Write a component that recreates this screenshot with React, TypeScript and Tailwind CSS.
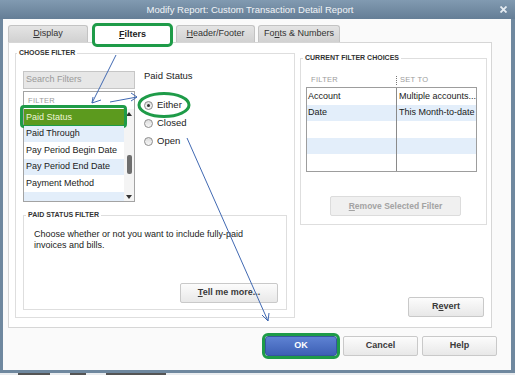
import React from "react";

const rowBlue = "bg-[#e3eefa]";

function Btn({
  children,
  className = "",
}: {
  children: React.ReactNode;
  className?: string;
}) {
  return (
    <div
      className={
        "flex h-[20px] items-center justify-center rounded-[2px] border border-[#c9c9c9] bg-linear-to-b from-[#fcfcfc] to-[#e8e8e8] text-[9px] font-bold text-[#3a3a3a] " +
        className
      }
    >
      {children}
    </div>
  );
}

function Radio({ checked, label }: { checked?: boolean; label: string }) {
  return (
    <div className="flex h-[18px] items-center">
      <span className="flex h-[9px] w-[9px] items-center justify-center rounded-full border border-[#8d8d8d] bg-linear-to-b from-[#dcdcdc] to-[#f8f8f8]">
        {checked && <span className="h-[3px] w-[3px] rounded-full bg-[#333]" />}
      </span>
      <span className="ml-[4px] text-[9.5px] text-[#222]">{label}</span>
    </div>
  );
}

function Tab({
  children,
  className = "",
}: {
  children: React.ReactNode;
  className?: string;
}) {
  return (
    <div
      className={
        "flex h-[17px] items-center justify-center rounded-t-[3px] border border-b-0 border-[#c3c3c3] bg-linear-to-b from-[#e4e4e4] to-[#d1d1d1] text-[9px] text-[#333] " +
        className
      }
    >
      {children}
    </div>
  );
}

const filters = [
  { t: "Paid Status", sel: true },
  { t: "Paid Through", blue: true },
  { t: "Pay Period Begin Date" },
  { t: "Pay Period End Date", blue: true },
  { t: "Payment Method" },
];

const choices = [
  { a: "Account", b: "Multiple accounts..." },
  { a: "Date", b: "This Month-to-date", blue: true },
  { a: "", b: "" },
  { a: "", b: "", blue: true },
  { a: "", b: "" },
];

export default function App() {
  return (
    <div className="relative flex h-[375px] w-[515px] flex-col overflow-hidden bg-[#e9ecef] font-['Liberation_Sans',Arial,sans-serif] text-[9px] text-[#222]">
      <div className="flex h-[373px] w-[515px] flex-col bg-[#6f889f]">
        {/* title bar */}
        <div className="flex h-[19px] items-center bg-linear-to-b from-[#819ab1] to-[#657e96]">
          <div className="flex-1 text-center text-[9.5px] leading-none text-[#f1f4f7]">
            Modify Report: Custom Transaction Detail Report
          </div>
          <svg width="7" height="7" viewBox="0 0 7 7" className="mr-[8px]">
            <path d="M0.5 0.5 L6.5 6.5 M6.5 0.5 L0.5 6.5" stroke="#e6ecf2" strokeWidth="1.8" />
          </svg>
        </div>

        {/* body */}
        <div className="mb-[3px] ml-[3px] mr-[4px] flex flex-1 flex-col bg-[#fafafa] pl-[5px] pt-[6px]">
          {/* tabs */}
          <div className="flex h-[17px] items-end">
            <Tab className="w-[80px]">
              <span>
                <span className="underline">D</span>isplay
              </span>
            </Tab>
            <div className="relative z-10 -mb-[5px] ml-[4px] flex h-[24px] w-[81px] items-center justify-center rounded-[5px] border-[3px] border-[#1e9b48] bg-white text-[9px] font-bold text-[#222]">
              <span>
                <span className="underline">F</span>ilters
              </span>
            </div>
            <Tab className="ml-[3px] w-[79px]">
              <span>
                <span className="underline">H</span>eader/Footer
              </span>
            </Tab>
            <Tab className="ml-[3px] w-[82px]">
              <span>
                Fo<span className="underline">n</span>ts &amp; Numbers
              </span>
            </Tab>
          </div>

          {/* panel */}
          <div className="flex h-[286px] w-[484px] gap-[5px] border border-[#d6d6d6] bg-white pb-[9px] pl-[6px] pr-[4px] pt-[6px]">
            {/* choose filter */}
            <fieldset className="flex w-[280px] flex-col border border-[#dedede] pb-[7px] pl-[7px] pr-[7px] pt-[14px]">
              <legend className="-ml-[6px] px-[2px] text-[7px] font-bold leading-[8px] text-[#333]">
                CHOOSE FILTER
              </legend>
              <div className="flex">
                <div className="flex w-[112px] flex-col">
                  <div className="flex h-[18px] items-center border border-[#c6c6c6] bg-[#e7e7e7] pl-[2px] text-[9px] text-[#9a9a9a]">
                    Search Filters
                  </div>
                  <div className="mt-[2px] flex h-[111px] flex-col border border-[#a3a3a3] bg-white">
                    <div className="flex h-[17px] shrink-0 items-center pl-[4px] text-[7.5px] tracking-[0.3px] text-[#9c9c9c]">
                      FILTER
                    </div>
                    <div className="flex flex-1">
                      <div className="flex w-[100px] flex-col">
                        {filters.map((f) => (
                          <div
                            key={f.t}
                            className={
                              "relative flex h-[16.5px] shrink-0 items-center whitespace-nowrap pl-[2px] text-[9px] " +
                              (f.sel
                                ? "bg-[#5c9a1e] text-[#eef5d6]"
                                : f.blue
                                ? rowBlue + " text-[#1a1a1a]"
                                : "bg-white text-[#1a1a1a]")
                            }
                          >
                            {f.t}
                            {f.sel && (
                              <div className="absolute -bottom-[2px] -left-[4px] -right-[3px] -top-[4px] rounded-[4px] border-[3px] border-[#1e9b48]" />
                            )}
                          </div>
                        ))}
                        <div className={"flex-1 " + rowBlue} />
                      </div>
                      <div className="flex w-[10px] flex-col items-center bg-[#f4f4f4]">
                        <div className="flex h-[9px] items-center justify-center">
                          <svg width="6" height="4" viewBox="0 0 6 4">
                            <polygon points="0,4 6,4 3,0" fill="#333" />
                          </svg>
                        </div>
                        <div className="mt-[37px] h-[19px] w-[5px] rounded-[2px] bg-[#6e6e6e]" />
                        <div className="flex-1" />
                        <div className="flex h-[9px] items-center justify-center">
                          <svg width="6" height="4" viewBox="0 0 6 4">
                            <polygon points="0,0 6,0 3,4" fill="#333" />
                          </svg>
                        </div>
                      </div>
                    </div>
                  </div>
                </div>
                <div className="ml-[9px] flex flex-col">
                  <div className="h-[10px] text-[9.5px] leading-[10px] text-[#222]">Paid Status</div>
                  <div className="mt-[15px] flex flex-col">
                    <Radio checked label="Either" />
                    <Radio label="Closed" />
                    <Radio label="Open" />
                  </div>
                </div>
              </div>

              {/* paid status filter */}
              <fieldset className="mt-[9px] flex flex-1 flex-col border border-[#dedede] pb-[6px] pl-[10px] pr-[8px] pt-[10px]">
                <legend className="-ml-[8px] px-[2px] text-[7px] font-bold leading-[8px] text-[#333]">
                  PAID STATUS FILTER
                </legend>
                <div className="text-[9px] leading-[10.5px] text-[#222]">
                  Choose whether or not you want to include fully-paid
                  <br />
                  invoices and bills.
                </div>
                <Btn className="mt-auto h-[19px] w-[98px] self-end">
                  <span>
                    <span className="underline">T</span>ell me more...
                  </span>
                </Btn>
              </fieldset>
            </fieldset>

            {/* right column */}
            <div className="mt-[5px] flex w-[187px] flex-col">
              <fieldset className="flex flex-col border border-[#dedede] pb-[8px] pl-[5px] pr-[9px] pt-[11px]">
                <legend className="-ml-[3px] px-[2px] text-[7px] font-bold leading-[8px] text-[#333]">
                  CURRENT FILTER CHOICES
                </legend>
                <div className="flex h-[14px] items-center text-[7.5px] tracking-[0.3px] text-[#9c9c9c]">
                  <div className="w-[90px] pl-[5px]">FILTER</div>
                  <div className="h-[9px] w-[1px] border-l border-dotted border-[#777]" />
                  <div className="pl-[3px]">SET TO</div>
                </div>
                <div className="flex h-[85px] flex-col border border-[#9d9d9d] bg-white">
                  {choices.map((c, i) => (
                    <div
                      key={i}
                      className={
                        "flex h-[16.6px] shrink-0 text-[9px] text-[#1a1a1a] " +
                        (c.blue ? rowBlue : "bg-white")
                      }
                    >
                      <div className="flex w-[90px] items-center border-r border-[#8a8a8a] pl-[1px]">
                        {c.a}
                      </div>
                      <div className="flex flex-1 items-center overflow-hidden whitespace-nowrap pl-[2px]">
                        {c.b}
                      </div>
                    </div>
                  ))}
                </div>
                <div className="ml-[24px] mt-[24px] flex h-[20px] w-[131px] items-center justify-center rounded-[2px] border border-[#dcdcdc] bg-[#f0f0f0] text-[8.5px] font-bold text-[#a3a3a3]">
                  <span>
                    <span className="underline">R</span>emove Selected Filter
                  </span>
                </div>
              </fieldset>
              <Btn className="mb-[1px] mr-[3px] mt-auto w-[76px] self-end">
                <span>
                  R<span className="underline">e</span>vert
                </span>
              </Btn>
            </div>
          </div>

          {/* bottom buttons */}
          <div className="mt-[8px] flex justify-end pr-[14px]">
            <div className="flex h-[20px] w-[72px] items-center justify-center rounded-[3px] border border-[#35569f] bg-linear-to-b from-[#5e82d3] to-[#3d60b5] text-[9px] font-bold text-white outline-3 outline-[#1e9b48]">
              OK
            </div>
            <Btn className="ml-[6px] w-[75px]">Cancel</Btn>
            <Btn className="ml-[4px] w-[75px]">Help</Btn>
          </div>
        </div>
      </div>

      {/* strip of background below the window */}
      <div className="flex flex-1 items-start gap-[20px] pl-[18px]">
        <div className="h-[2px] w-[32px] bg-[#555]" />
        <div className="h-[2px] w-[16px] bg-[#555]" />
        <div className="h-[2px] w-[60px] bg-[#555]" />
      </div>

      {/* annotations */}
      <svg
        className="pointer-events-none absolute left-0 top-0"
        width="515"
        height="375"
        viewBox="0 0 515 375"
      >
        <g stroke="#4169b2" strokeWidth="1" fill="none">
          <path d="M116 55 L92 103 M93 97 L92 103 L101 100" />
          <path d="M110 102 L137 97 M131 93 L137 97 L131 101" />
          <path d="M187 138 L268 321 M262 315 L268 321 L269 313" />
        </g>
        <ellipse cx="164" cy="105" rx="25" ry="11.5" stroke="#1e9b48" strokeWidth="3" fill="none" />
      </svg>
    </div>
  );
}
